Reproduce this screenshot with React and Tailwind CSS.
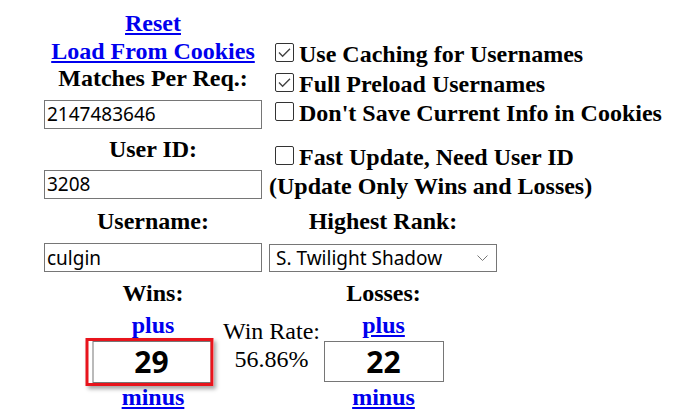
import React from "react";

const serif = "[font-family:'Liberation_Serif','Times_New_Roman',serif]";
const sans = "[font-family:'Noto_Sans','Open_Sans',sans-serif]";

function Box({ checked }) {
  return (
    <span className="inline-block w-[19px] h-[19px] ml-[6px] mr-[5px] border border-[#333] rounded-[2px] bg-white overflow-hidden">
      {checked && (
        <svg viewBox="0 0 17 17" width="17" height="17" className="block">
          <path d="M3 8.6 L6.6 12.2 L14 4.8" fill="none" stroke="#444" strokeWidth="1.4" />
        </svg>
      )}
    </span>
  );
}

function Check({ checked, children }) {
  return (
    <div className="leading-[29.5px] whitespace-nowrap">
      <Box checked={checked} />
      {children}
    </div>
  );
}

function Field({ value, className = "" }) {
  return (
    <input
      readOnly
      value={value}
      className={`block w-[218px] h-[29px] border border-[#767676] bg-white px-[2px] text-[19px] font-normal text-black outline-none ${sans} ${className}`}
    />
  );
}

function A({ children, plain }) {
  return (
    <a href="#" className={`text-[#0000ee] font-bold ${plain ? "no-underline" : "underline"}`}>
      {children}
    </a>
  );
}

export default function App() {
  return (
    <div className={`w-[681px] h-[420px] bg-white text-black text-[24px] font-bold overflow-hidden ${serif}`}>
      <div className="pl-[44px] pt-[10px]">
        {/* top block: actions + options */}
        <div className="flex items-end">
          <div className="w-[218px] flex flex-col items-center leading-[27.6px]">
            <A>Reset</A>
            <A>Load From Cookies</A>
            <div className="whitespace-nowrap">Matches Per Req.:</div>
            <Field value="2147483646" className="mt-[7px]" />
          </div>
          <div className="ml-[7px]">
            <Check checked>Use Caching for Usernames</Check>
            <Check checked>Full Preload Usernames</Check>
            <Check>Don't Save Current Info in Cookies</Check>
          </div>
        </div>

        {/* user id */}
        <div className="flex items-start mt-[7.5px]">
          <div className="w-[218px] flex flex-col items-center leading-[27.6px]">
            <div>User ID:</div>
            <Field value="3208" className="mt-[6px]" />
          </div>
          <div className="ml-[7px] pt-[6.7px]">
            <Check>Fast Update, Need User ID</Check>
            <div className="leading-[29.5px] whitespace-nowrap">(Update Only Wins and Losses)</div>
          </div>
        </div>

        {/* username + rank */}
        <div className="flex mt-[6.5px]">
          <div className="w-[218px] flex flex-col items-center leading-[27.6px]">
            <div>Username:</div>
            <Field value="culgin" className="mt-[7px]" />
          </div>
          <div className="ml-[7px] w-[228px] flex flex-col items-center leading-[27.6px]">
            <div>Highest Rank:</div>
            <div
              className={`mt-[8px] w-[228px] h-[28px] border border-[#767676] bg-white flex items-center justify-between pl-[6px] pr-[8px] text-[19px] font-normal ${sans}`}
            >
              <span className="leading-none">S. Twilight Shadow</span>
              <svg width="11" height="6" viewBox="0 0 11 6">
                <path d="M0.5 0.5 L5.5 5.5 L10.5 0.5" fill="none" stroke="#777" strokeWidth="1" />
              </svg>
            </div>
          </div>
        </div>

        {/* wins / losses */}
        <div className="flex mt-[7.7px] ml-[41px] leading-[27.6px]">
          <div className="w-[136px] flex flex-col items-center">
            <div>Wins:</div>
            <div className="mt-[5px]">
              <A plain>plus</A>
            </div>
            <div className="relative mt-[1.3px] -translate-x-[1.5px]">
              <div
                className={`w-[119px] h-[42px] border border-[#767676] bg-white flex items-center justify-center text-[30px] font-bold ${sans}`}
              >
                29
              </div>
              <div className="absolute -left-[7px] -top-[3px] -right-[2px] -bottom-[3px] border-[3px] border-[#e8141c] shadow-[2px_3px_4px_rgba(0,0,0,0.35)]" />
            </div>
            <div className="mt-[1px]">
              <A>minus</A>
            </div>
          </div>
          <div className="w-[101px] flex flex-col items-center font-normal leading-[28px] pt-[37.3px]">
            <div className="whitespace-nowrap">Win Rate:</div>
            <div className="mt-[0.4px]">56.86%</div>
          </div>
          <div className="w-[123px] flex flex-col items-center">
            <div>Losses:</div>
            <div className="mt-[5px]">
              <A>plus</A>
            </div>
            <div
              className={`mt-[1.3px] w-[120px] h-[41px] border border-[#767676] bg-white flex items-center justify-center text-[30px] font-bold ${sans}`}
            >
              22
            </div>
            <div className="mt-[1.5px]">
              <A>minus</A>
            </div>
          </div>
        </div>
      </div>
    </div>
  );
}
